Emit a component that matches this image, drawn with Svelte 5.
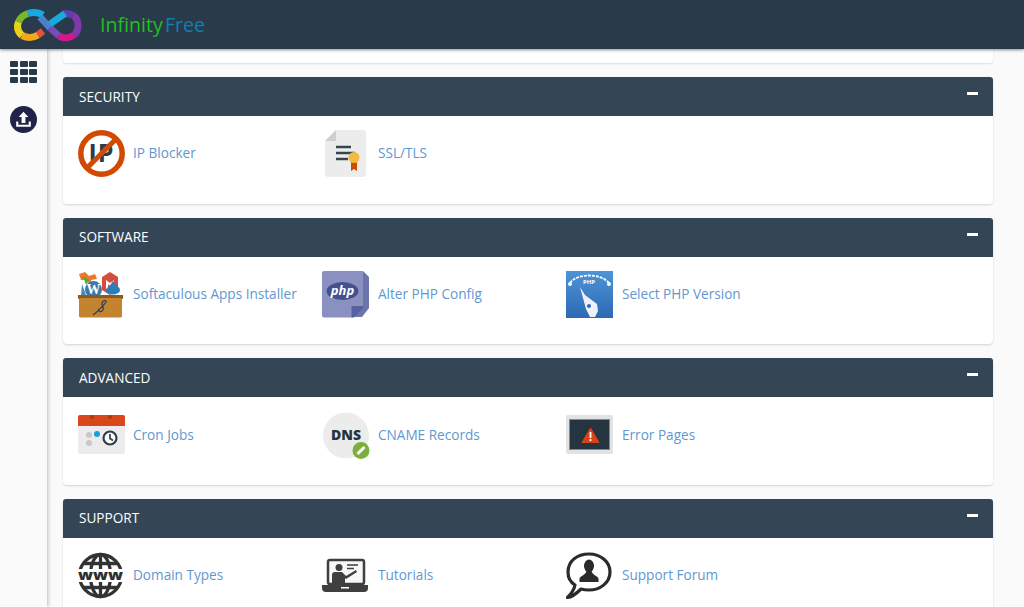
<script>
    const groups = [
        { title: 'SECURITY', items: [['ip', 'IP Blocker'], ['ssl', 'SSL/TLS']] },
        { title: 'SOFTWARE', items: [['soft', 'Softaculous Apps Installer'], ['php', 'Alter PHP Config'], ['gauge', 'Select PHP Version']] },
        { title: 'ADVANCED', items: [['cron', 'Cron Jobs'], ['dns', 'CNAME Records'], ['err', 'Error Pages']] },
        { title: 'SUPPORT', items: [['www', 'Domain Types'], ['tut', 'Tutorials'], ['forum', 'Support Forum']] }
    ];
</script>

<div class="page">
    <header class="topbar">
        <svg class="logo" width="70" height="40" viewBox="0 0 70 40" fill="none" stroke-width="7">
            <path d="M30 10 C25 7 20 7 15 8.500" stroke="#19a9e0" />
            <path d="M15 8.500 C10 10 7 13 5.500 17" stroke="#7ab829" />
            <path d="M5.500 17 C3.500 22 5 27 9 30.500" stroke="#e8d21c" />
            <path d="M9 30.500 C14 33 20 33 25 30" stroke="#f2a81d" />
            <path d="M25 30 L30 26" stroke="#e9503a" />
            <path d="M27 12 L37 23" stroke="#4c7fc8" />
            <path d="M37 23 L46 31" stroke="#7a4bb5" />
            <path d="M46 31 C51 34 57 33 61 30" stroke="#d2188f" />
            <path d="M61 30 C67 25 66 14 60 10.500" stroke="#7d3aa8" />
            <path d="M60 10.500 C56 8 53 8 50 9" stroke="#5b3fae" />
            <path d="M52 8.500 L37 19" stroke="#19a9e0" />
        </svg>
        <span class="brand"><span class="green">Infinity</span> <span class="blue">Free</span></span>
    </header>

    <div class="body">
        <aside class="side">
            <div class="grid-icon">
                {#each Array(9) as _}<i></i>{/each}
            </div>
            <svg width="27" height="27" viewBox="0 0 28 28">
                <circle cx="14" cy="14" r="14" fill="#20244a" />
                <path d="M14 6 L19 11.500 H16 V17.500 H12 V11.500 H9 Z" fill="#fff" />
                <path d="M7.500 16 V20.500 H20.500 V16" fill="none" stroke="#fff" stroke-width="2.200" />
            </svg>
        </aside>

        <main class="main">
            <div class="stub"></div>
            {#each groups as g}
                <section class="panel">
                    <div class="head">
                        <h2>{g.title}</h2>
                        <span class="minus"></span>
                    </div>
                    <div class="items">
                        {#each g.items as [icon, label]}
                            <div class="item">
                                <span class="ico">
                                    {#if icon === 'ip'}
                                        <svg width="48" height="48" viewBox="0 0 48 48">
                                            <circle cx="23.500" cy="23.500" r="20.700" fill="#fff" stroke="#d04a02" stroke-width="5.500" />
                                            <text x="23.500" y="32" class="ipt">IP</text>
                                            <path d="M38 9 L9 38" stroke="#d04a02" stroke-width="5" />
                                        </svg>
                                    {:else if icon === 'ssl'}
                                        <svg width="48" height="48" viewBox="0 0 48 48">
                                            <path d="M14 0 H41 Q44 0 44 3 V44 Q44 47 41 47 H6 Q3 47 3 44 V11 Z" fill="#ececec" />
                                            <path d="M14 0 V11 H3 Z" fill="#cfcfcf" />
                                            <path d="M14 17 H29 M14 23 H33 M14 29 H26" stroke="#35444f" stroke-width="2.400" />
                                            <path d="M29 30 H35 V41 L32 39 L29 41 Z" fill="#d04a02" />
                                            <circle cx="32" cy="27.500" r="5.500" fill="#f4b942" />
                                        </svg>
                                    {:else if icon === 'soft'}
                                        <svg width="48" height="48" viewBox="0 0 48 48">
                                            <path d="M1 3 L7 1 L11 5 L17 3 L19 8 L13 9 L13 14 L8 9 L3 9 Z" fill="#e77a2c" />
                                            <path d="M5 5 L11 9 L8 14 Z" fill="#5aa53a" />
                                            <path d="M24 6 L32 1 L40 6 V19 L32 24 L24 19 Z" fill="#d64d3f" />
                                            <path d="M28 9 L32 12 L36 9 V18 H34 V13 L32 15 L30 13 V18 H28 Z" fill="#fff" />
                                            <circle cx="15.500" cy="18.500" r="8.500" fill="#3d79a6" />
                                            <text x="15.500" y="23" class="wp">W</text>
                                            <path d="M35 9 C36 14 42 15 42 19 C42 24 31 25 28 21 C26 17 34 15 35 9 Z" fill="#2b7fb8" />
                                            <path d="M4 13 L8 24 H3 Z" fill="#4b8bb8" />
                                            <rect x="0" y="24" width="45" height="4" fill="#8a5a22" />
                                            <path d="M1 27 H44 V45 Q44 46.500 42 46.500 H3 Q1 46.500 1 45 Z" fill="#c4842f" />
                                            <path d="M15 44 C18 42 26 34 28 31 C29 29 25 29 24 32 C23 35 27 36 25 39 C23 42 19 40 21 38" fill="none" stroke="#30405a" stroke-width="1.300" />
                                        </svg>
                                    {:else if icon === 'php'}
                                        <svg width="48" height="48" viewBox="0 0 48 48">
                                            <path d="M41 0 L47 6 V37 L40 46 H30 Z" fill="#6c75ab" />
                                            <path d="M2 0 H41 V35 L30 46.500 H2 Q0 46.500 0 44.500 V2 Q0 0 2 0 Z" fill="#8a90c0" />
                                            <path d="M29.500 46.500 V35 H41 V37 L32 46.500 Z" fill="#5761a0" />
                                            <ellipse cx="20.500" cy="20" rx="16" ry="9" fill="#45508f" />
                                            <text x="20.500" y="23.500" class="phpt">php</text>
                                        </svg>
                                    {:else if icon === 'gauge'}
                                        <svg width="48" height="48" viewBox="0 0 48 48">
                                            <defs>
                                                <linearGradient id="blue" x1="0" y1="0" x2="0" y2="1">
                                                    <stop offset="0" stop-color="#4e94d6" />
                                                    <stop offset="1" stop-color="#2c69b4" />
                                                </linearGradient>
                                            </defs>
                                            <rect x="0" y="0" width="47" height="47" fill="url(#blue)" />
                                            <path d="M4 12 C11 2 35 2 43 12" fill="none" stroke="#fff" stroke-width="1.800" stroke-dasharray="3 1" />
                                            <circle cx="4" cy="13" r="2" fill="#fff" />
                                            <circle cx="43" cy="13" r="2" fill="#fff" />
                                            <text x="23" y="13" class="gt">PHP</text>
                                            <path d="M14 16 L19 24 L31 33 L32 40 L29 46 L24 46 L20 38 Z" fill="#eef2f8" />
                                            <circle cx="23" cy="35" r="2" fill="#2c69b4" />
                                        </svg>
                                    {:else if icon === 'cron'}
                                        <svg width="48" height="48" viewBox="0 0 48 48">
                                            <rect x="0" y="3" width="47" height="39" rx="2" fill="#ececec" />
                                            <path d="M0 14 V5 Q0 3 2 3 H45 Q47 3 47 5 V14 Z" fill="#d8481a" />
                                            <circle cx="14" cy="5" r="2" fill="#a93b18" />
                                            <circle cx="32" cy="5" r="2" fill="#a93b18" />
                                            <circle cx="11" cy="23" r="3" fill="#c9c9c9" />
                                            <circle cx="19" cy="22" r="3" fill="#1a9fdc" />
                                            <circle cx="11" cy="31" r="3" fill="#c9c9c9" />
                                            <circle cx="32" cy="26" r="6.500" fill="#fff" stroke="#2f3e4b" stroke-width="2.200" />
                                            <path d="M32 22 V26.500 L35 28.500" fill="none" stroke="#2f3e4b" stroke-width="1.700" />
                                        </svg>
                                    {:else if icon === 'dns'}
                                        <svg width="48" height="48" viewBox="0 0 48 48">
                                            <circle cx="24" cy="23.500" r="23" fill="#ececec" />
                                            <text x="24" y="27.500" class="dnst">DNS</text>
                                            <circle cx="39" cy="38.500" r="8.500" fill="#7cae3f" />
                                            <path d="M35.500 42 L42.500 35" stroke="#fff" stroke-width="3" />
                                        </svg>
                                    {:else if icon === 'err'}
                                        <svg width="48" height="48" viewBox="0 0 48 48">
                                            <rect x="0" y="3" width="47" height="39" rx="2" fill="#e2e2e2" />
                                            <rect x="3.500" y="7.500" width="40" height="30" fill="#25343f" stroke="#7f8a93" />
                                            <path d="M24.500 16 L33 30.500 H16 Z" fill="#d8431a" stroke="#d8431a" stroke-width="1" stroke-linejoin="round" />
                                            <path d="M24.500 20 V26 M24.500 27 V29" stroke="#fff" stroke-width="1.800" />
                                        </svg>
                                    {:else if icon === 'www'}
                                        <svg width="48" height="48" viewBox="0 0 48 48">
                                            <g fill="none" stroke="#333" stroke-width="3.300">
                                                <circle cx="22.500" cy="23.500" r="21" />
                                                <ellipse cx="22.500" cy="23.500" rx="10" ry="21" />
                                                <path d="M22.500 3 V44 M6 11.500 H39 M6 35.500 H39" />
                                            </g>
                                            <rect x="0" y="17" width="46" height="13" fill="#fff" />
                                            <text x="22.500" y="27.500" class="wwwt" textLength="45" lengthAdjust="spacingAndGlyphs">www</text>
                                        </svg>
                                    {:else if icon === 'tut'}
                                        <svg width="48" height="48" viewBox="0 0 48 48">
                                            <rect x="6" y="8" width="36" height="24" rx="2" fill="#f7f7f7" stroke="#3f3f3f" stroke-width="2.500" />
                                            <path d="M0 33 H46 V36 Q46 40 42 40 H4 Q0 40 0 36 Z" fill="#3f3f3f" />
                                            <rect x="19" y="35" width="8" height="1.500" fill="#fff" />
                                            <circle cx="17" cy="15.500" r="3.500" fill="#3f3f3f" />
                                            <path d="M10 31 V23 Q10 20 13 20 H20 L24 24 L34 18 L35 20 L24 27 L23 26 V31 Z" fill="#3f3f3f" />
                                            <path d="M25 13 H36 M25 16.500 H32" stroke="#3f3f3f" stroke-width="1.300" />
                                        </svg>
                                    {:else if icon === 'forum'}
                                        <svg width="48" height="48" viewBox="0 0 48 48">
                                            <path d="M9 33 C4 30 2 25 2 20 C2 9 11 2 23 2 C35 2 44 10 44 20 C44 31 34 38 23 38 C20 38 18 38 15 37 C11 41 6 45 1.500 45.500 C5 42 8 38 9 33 Z" fill="#fff" stroke="#2b2b2b" stroke-width="3.200" stroke-linejoin="round" />
                                            <ellipse cx="23" cy="14" rx="5" ry="6.500" fill="#2b2b2b" />
                                            <path d="M13.500 30 V27 C13.500 24 20 23 20.500 19 H25.500 C26 23 32.500 24 32.500 27 V30 Z" fill="#2b2b2b" />
                                        </svg>
                                    {/if}
                                </span>
                                <span class="label">{label}</span>
                            </div>
                        {/each}
                    </div>
                </section>
            {/each}
        </main>
    </div>
</div>

<style>
    :global(body) {
        margin: 0;
        font-family: 'Open Sans', sans-serif;
    }

    .page {
        height: 607px;
        overflow: hidden;
        background: #fafafa;
    }

    .topbar {
        height: 49px;
        background: #293a4a;
        display: flex;
        align-items: center;
        padding-left: 13px;
        box-shadow: 0 1px 3px rgba(0, 0, 0, 0.45);
        position: relative;
        z-index: 2;
    }

    .brand {
        margin-left: 17px;
        font-size: 19.600px;
        word-spacing: -3px;
    }

    .green { color: #1fc01f; }
    .blue { color: #0f7fb0; }

    .body {
        display: flex;
        height: 558px;
    }

    .side {
        width: 47px;
        background: #fafafa;
        box-shadow: 1px 0 4px rgba(0, 0, 0, 0.25);
        display: flex;
        flex-direction: column;
        align-items: center;
        padding-top: 12px;
        gap: 23px;
        flex: none;
    }

    .grid-icon {
        display: grid;
        grid-template-columns: repeat(3, 8px);
        grid-auto-rows: 6px;
        gap: 2px 1.500px;
    }

    .grid-icon i {
        background: #293a4a;
        border-radius: 1px;
    }

    .main {
        flex: 1;
        padding: 0 31px 0 16px;
    }

    .stub {
        height: 14px;
        background: #fff;
        border-radius: 0 0 4px 4px;
        box-shadow: 0 1px 2px rgba(0, 0, 0, 0.12);
        margin-bottom: 14px;
    }

    .panel {
        background: #fff;
        border-radius: 4px;
        box-shadow: 0 1px 2px rgba(0, 0, 0, 0.15);
        margin-bottom: 14px;
    }

    .head {
        height: 39px;
        background: #344656;
        border-radius: 3px 3px 0 0;
        display: flex;
        align-items: center;
        justify-content: space-between;
        padding: 0 15px 0 16px;
    }

    h2 {
        margin: 0 0 1px;
        color: #fff;
        font-size: 13.600px;
        font-weight: 400;
    }

    .minus {
        width: 11px;
        height: 3px;
        background: #fff;
        margin-bottom: 6px;
    }

    .items {
        display: flex;
        height: 87.670px;
        padding: 14.400px 0 0 15px;
        box-sizing: border-box;
    }

    .item {
        width: 244px;
        height: 48px;
        display: flex;
        align-items: center;
    }

    .ico {
        width: 48px;
        height: 48px;
        flex: none;
        display: block;
    }

    .ico svg {
        display: block;
    }

    .label {
        margin-left: 7px;
        margin-bottom: 3px;
        color: #5f97d1;
        font-size: 13.600px;
    }

    .item + .item .label {
        margin-left: 8px;
    }

    text {
        font-family: 'Open Sans', sans-serif;
        text-anchor: middle;
    }

    .ipt {
        font-size: 25px;
        font-weight: 700;
        fill: #2e3a46;
        letter-spacing: 1px;
    }

    .wp {
        font-family: 'Liberation Serif', serif;
        font-size: 14px;
        font-weight: 700;
        fill: #fff;
    }

    .phpt {
        font-size: 13px;
        font-weight: 700;
        font-style: italic;
        fill: #fff;
    }

    .gt {
        font-size: 6px;
        font-weight: 700;
        fill: #fff;
    }

    .dnst {
        font-size: 14px;
        font-weight: 800;
        fill: #25343f;
    }

    .wwwt {
        font-size: 14px;
        font-weight: 800;
        fill: #2f2f2f;
    }
</style>
